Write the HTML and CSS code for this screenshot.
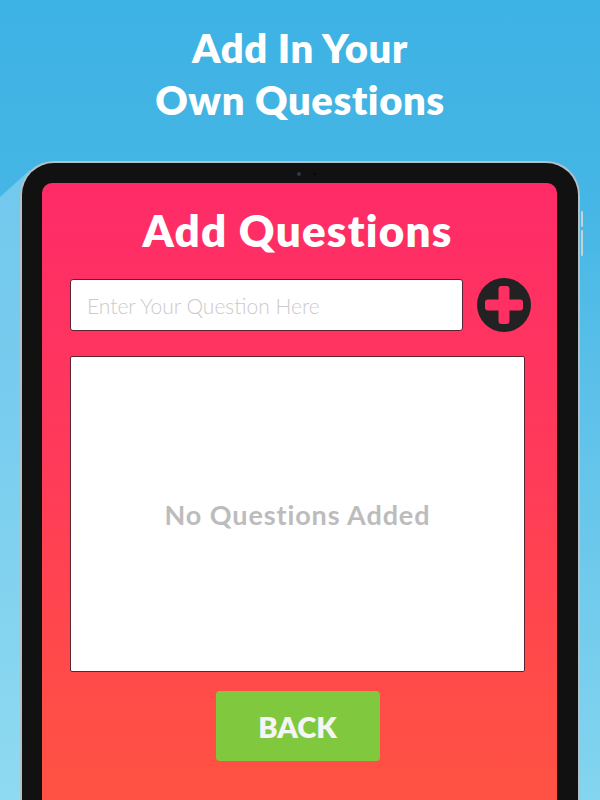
FILE: index.html
```html
<!DOCTYPE html>
<html lang="en">
<head>
<meta charset="utf-8">
<title>Add Questions</title>
<link rel="stylesheet" href="styles.css">
</head>
<body>
<div class="page">
  <div class="bg-shade"></div>
  <h1 class="headline">Add In Your<br>Own Questions</h1>
  <div class="device">
    <span class="camera"></span><span class="sensor"></span>
    <span class="side-btn side-btn-a"></span><span class="side-btn side-btn-b"></span>
    <div class="screen">
      <h2 class="title">Add Questions</h2>
      <div class="input-row">
        <input class="question-input" type="text" placeholder="Enter Your Question Here">
        <button class="add-btn" aria-label="Add question">
          <svg width="54" height="54" viewBox="0 0 54 54">
            <circle cx="27" cy="27" r="27" fill="#222222"/>
            <rect x="8" y="21.5" width="38" height="11" rx="3" fill="#fe2f63"/>
            <rect x="21.5" y="8" width="11" height="38" rx="3" fill="#fe2f63"/>
          </svg>
        </button>
      </div>
      <div class="question-list">
        <p class="empty">No Questions Added</p>
      </div>
      <button class="back-btn">BACK</button>
    </div>
  </div>
</div>
</body>
</html>
```

FILE: styles.css
```css
html, body {
  margin: 0;
  padding: 0;
}
body {
  width: 600px;
  height: 800px;
  overflow: hidden;
  font-family: "Lato", "Liberation Sans", sans-serif;
  font-variant-ligatures: none;
}
.page {
  position: relative;
  width: 600px;
  height: 800px;
  overflow: hidden;
  background: linear-gradient(to bottom, #3db2e4 0%, #45b6e5 25%, #62c3ea 55%, #84d5ef 100%);
}
.bg-shade {
  position: absolute;
  left: 0;
  top: 0;
  width: 30px;
  height: 800px;
  background: linear-gradient(to bottom, #6cc7ec 0%, #78ccee 50%, #8edaf1 100%);
  clip-path: polygon(0 197px, 30px 170px, 30px 800px, 0 800px);
}
.headline {
  position: relative;
  margin: 0;
  padding-top: 22px;
  font-size: 40px;
  line-height: 52px;
  font-weight: 800;
  color: #ffffff;
  text-align: center;
  letter-spacing: 0.6px;
}
.device {
  position: relative;
  margin: 35px 20px 0;
  height: 700px;
  box-sizing: border-box;
  border: 2px solid #b4c0c8;
  border-bottom: none;
  border-radius: 34px 34px 0 0;
  background: #111111;
  padding: 20px 21px 0 20px;
}
.camera {
  position: absolute;
  top: 9px;
  left: 275px;
  width: 4px;
  height: 4px;
  border-radius: 50%;
  background: #2c3a48;
}
.sensor {
  position: absolute;
  top: 10px;
  left: 292px;
  width: 2px;
  height: 2px;
  border-radius: 50%;
  background: #050505;
}
.side-btn {
  position: absolute;
  right: -5px;
  width: 2px;
  background: #c8d0d6;
  border-radius: 1px;
}
.side-btn-a { top: 48px; height: 16px; }
.side-btn-b { top: 67px; height: 26px; }
.screen {
  height: 100%;
  box-sizing: border-box;
  border-radius: 10px 10px 0 0;
  background: linear-gradient(to bottom, #fe2b68 0%, #ff3a5a 40%, #ff4c48 75%, #ff5540 100%);
  padding: 22px 32px 0 28px;
  display: flex;
  flex-direction: column;
  align-items: center;
}
.title {
  margin: 0;
  font-size: 44px;
  line-height: 50px;
  font-weight: 800;
  color: #ffffff;
  text-align: center;
  letter-spacing: 1.2px;
}
.input-row {
  margin-top: 23px;
  margin-right: -6px;
  align-self: stretch;
  display: flex;
  align-items: center;
  gap: 14px;
}
.question-input {
  flex: none;
  width: 393px;
  height: 52px;
  box-sizing: border-box;
  margin: 0;
  border: 1px solid #5b2434;
  border-radius: 3px;
  background: #ffffff;
  padding: 0 16px;
  font-family: "Lato", "Liberation Sans", sans-serif;
  font-size: 21px;
  font-weight: 300;
  color: #333333;
  outline: none;
}
.question-input::placeholder {
  color: #cbcbcb;
}
.add-btn {
  width: 54px;
  height: 54px;
  margin: 0;
  padding: 0;
  border: none;
  background: none;
  display: block;
  flex: none;
}
.add-btn svg {
  display: block;
}
.question-list {
  margin-top: 24px;
  align-self: stretch;
  height: 316px;
  box-sizing: border-box;
  border: 1px solid #5b2434;
  border-radius: 2px;
  background: #ffffff;
  display: flex;
  align-items: center;
  justify-content: center;
}
.empty {
  margin: 0;
  font-size: 27px;
  font-weight: 700;
  color: #bcbcbc;
  letter-spacing: 0.9px;
}
.back-btn {
  margin-top: 19px;
  width: 164px;
  height: 70px;
  border: none;
  border-radius: 4px;
  background: #80c93e;
  font-family: "Lato", "Liberation Sans", sans-serif;
  font-size: 29px;
  font-weight: 800;
  color: #f5f5f5;
  padding: 0;
}
```
